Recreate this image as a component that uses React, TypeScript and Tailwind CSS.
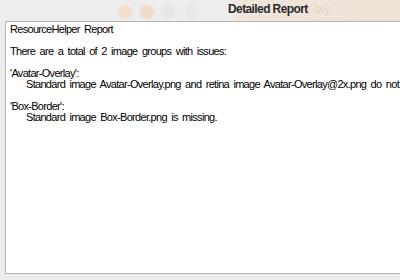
import React from 'react';

const lines = [
  { text: 'ResourceHelper Report', indent: false },
  { text: '', indent: false },
  { text: 'There are a total of 2 image groups with issues:', indent: false },
  { text: '', indent: false },
  { text: "'Avatar-Overlay':", indent: false },
  { text: 'Standard image Avatar-Overlay.png and retina image Avatar-Overlay@2x.png do not have matching sizes.', indent: true },
  { text: '', indent: false },
  { text: "'Box-Border':", indent: false },
  { text: 'Standard image Box-Border.png is missing.', indent: true },
];

const App: React.FC = () => {
  return (
    <div className="w-[400px] h-[280px] bg-[#ececec] overflow-hidden flex flex-col font-['Liberation_Sans',Arial,sans-serif]">
      {/* title bar, with the blurred window behind it on the right */}
      <div className="h-[21px] shrink-0 flex items-center bg-[linear-gradient(to_right,#ededed_0,#ededed_228px,#f0e5da_240px,#efe2d5_100%)]">
        <div className="flex items-center gap-[8px] pl-[118px] pt-[2px]">
          <span className="w-[14px] h-[14px] rounded-full bg-[#f3ddce] blur-[1px]" />
          <span className="w-[14px] h-[14px] rounded-full bg-[#f1d9c9] blur-[1px]" />
          <span className="w-[14px] h-[14px] rounded-full bg-[#e6e6e6] blur-[1px]" />
          <span className="w-[14px] h-[14px] rounded-full bg-[#e8e8e8] blur-[1px]" />
        </div>
        <span className="ml-[30px] mb-[4px] text-[12px] font-bold tracking-[-0.6px] text-[#2a2a2a] leading-none">
          Detailed Report
        </span>
        <span className="ml-[7px] mb-[4px] text-[12px] text-[#e2d3c2] blur-[0.6px] leading-none">lay</span>
      </div>

      {/* report text view */}
      <div className="flex-1 flex flex-col pl-[5px] pb-[6px]">
        <div className="flex-1 bg-white border-t border-l border-b border-[#b4b4b4] pt-[2px] pl-[4px] overflow-hidden">
          {lines.map((l, i) => (
            <div
              key={i}
              className={`h-[11px] text-[11px] leading-[11px] tracking-[-0.7px] [word-spacing:2px] text-black whitespace-nowrap ${l.indent ? 'pl-[16px]' : ''}`}
            >
              {l.text}
            </div>
          ))}
        </div>
      </div>
    </div>
  );
};

export default App;
